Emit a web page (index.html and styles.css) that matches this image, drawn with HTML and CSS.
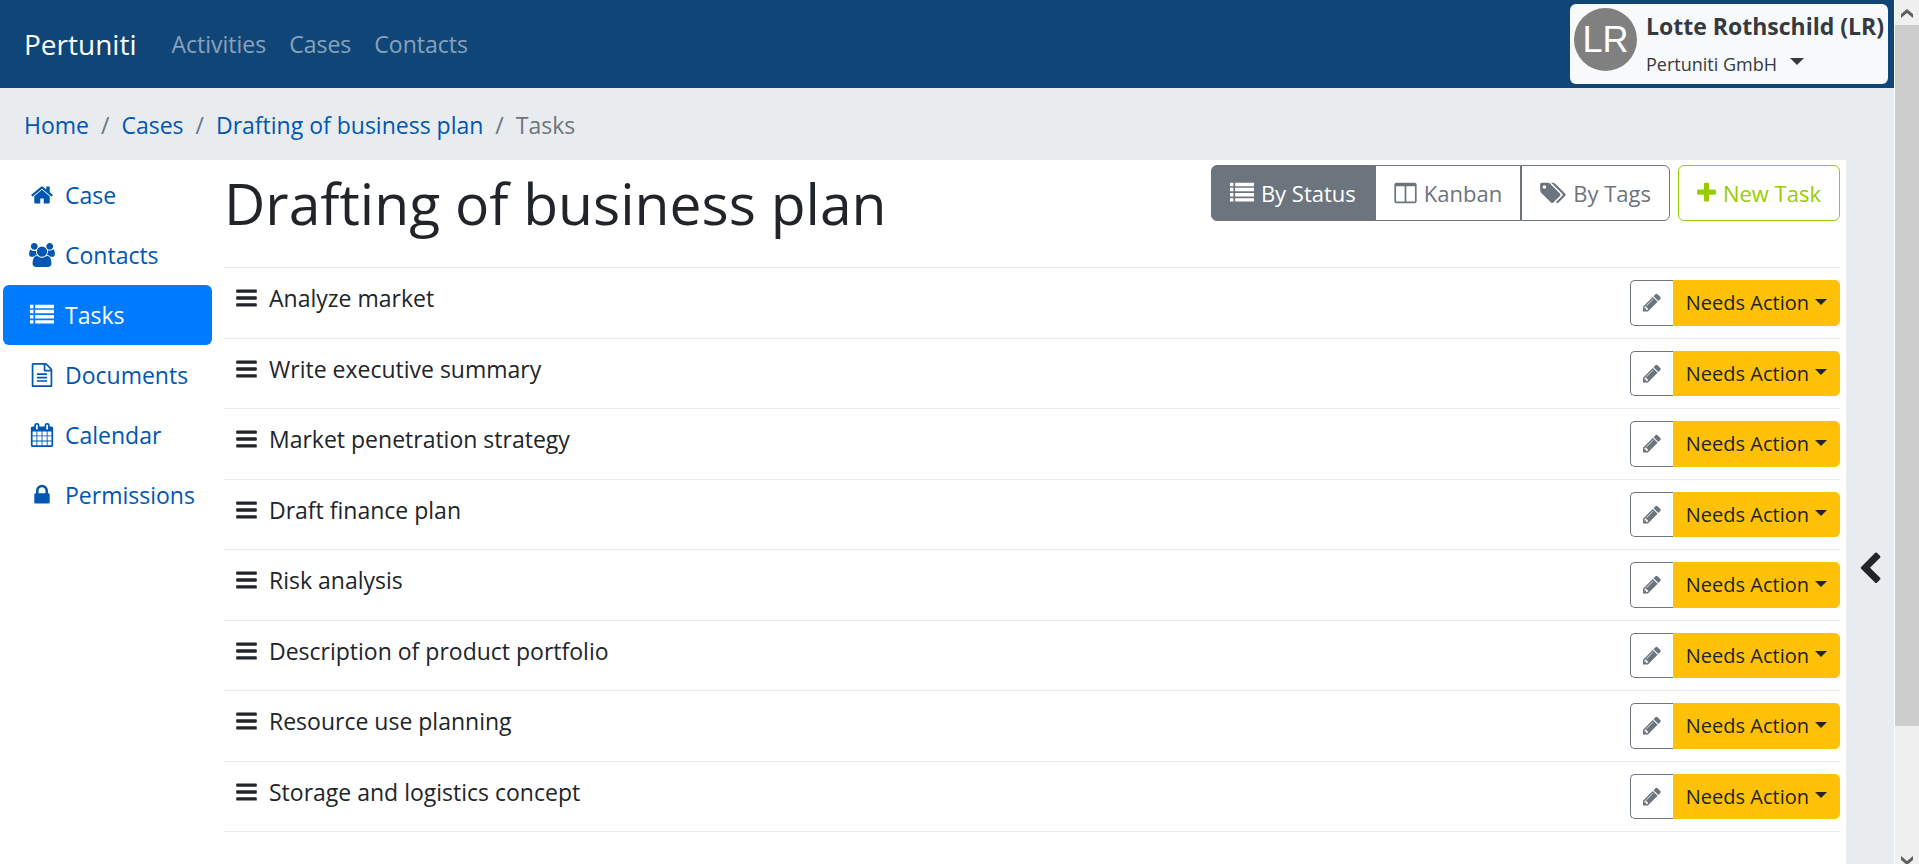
FILE: index.html
```html
<!DOCTYPE html>
<html lang="en">
<head>
    <meta charset="UTF-8">
    <meta name="viewport" content="width=device-width, initial-scale=1.0">
    <title>Drafting of business plan - Tasks</title>
    <link rel="stylesheet" href="styles.css">
</head>
<body>
    <!-- icon sprite -->
    <svg class="sprite" aria-hidden="true">
        <symbol id="home" viewBox="0 0 1792 1792"><path d="M1472 992v480q0 26-19 45t-45 19h-384v-384h-256v384h-384q-26 0-45-19t-19-45v-480q0-1 .5-3t.5-3l575-474 575 474q1 2 1 6zm223-69l-62 74q-8 9-21 11h-3q-13 0-21-7l-692-577-692 577q-12 8-24 7-13-2-21-11l-62-74q-8-10-7-23.5t11-21.5l719-599q32-26 76-26t76 26l244 204v-195q0-14 9-23t23-9h192q14 0 23 9t9 23v408l219 182q10 8 11 21.5t-7 23.5z"/></symbol>
        <symbol id="users" viewBox="0 0 1920 1792"><path d="M593 896q-162 5-265 128h-134q-82 0-138-40.5t-56-118.5q0-353 124-353 6 0 43.500 21t97.500 42.500 119 21.500q67 0 133-23-5 37-5 66 0 159 81 282zm1071 637q0 120-73 189.500t-194 69.500h-874q-121 0-194-69.500t-73-189.500q0-53 3.500-103.500t14-109 26.500-108.500 43-97.500 62-81 85.500-53.500 111.500-20q10 0 43 21.500t73 48 107 48 135 21.500 135-21.500 107-48 73-48 43-21.500q61 0 111.500 20t85.500 53.500 62 81 43 97.500 26.500 108.500 14 109 3.500 103.500zm-1024-1277q0 106-75 181t-181 75-181-75-75-181 75-181 181-75 181 75 75 181zm704 384q0 159-112.500 271.500t-271.500 112.500-271.500-112.500-112.500-271.500 112.500-271.500 271.500-112.500 271.500 112.500 112.500 271.500zm576 225q0 78-56 118.500t-138 40.500h-134q-103-123-265-128 81-123 81-282 0-29-5-66 66 23 133 23 59 0 119-21.500t97.500-42.500 43.500-21q124 0 124 353zm-128-609q0 106-75 181t-181 75-181-75-75-181 75-181 181-75 181 75 75 181z"/></symbol>
        <symbol id="list" viewBox="0 0 1792 1792"><path d="M0 128h256v256h-256zM384 128h1408v256h-1408zM0 512h256v256h-256zM384 512h1408v256h-1408zM0 896h256v256h-256zM384 896h1408v256h-1408zM0 1280h256v256h-256zM384 1280h1408v256h-1408z"/></symbol>
        <symbol id="file" viewBox="0 0 1792 1792"><path d="M1596 380q28 28 48 76t20 88v1152q0 40-28 68t-68 28h-1344q-40 0-68-28t-28-68v-1600q0-40 28-68t68-28h896q40 0 88 20t76 48zm-444-244v376h376q-10-29-22-41l-313-313q-12-12-41-22zm384 1528v-1024h-416q-40 0-68-28t-28-68v-416h-768v1536h1280zm-1024-864q0-14 9-23t23-9h704q14 0 23 9t9 23v64q0 14-9 23t-23 9h-704q-14 0-23-9t-9-23v-64zm736 224q14 0 23 9t9 23v64q0 14-9 23t-23 9h-704q-14 0-23-9t-9-23v-64q0-14 9-23t23-9h704zm0 256q14 0 23 9t9 23v64q0 14-9 23t-23 9h-704q-14 0-23-9t-9-23v-64q0-14 9-23t23-9h704z"/></symbol>
        <symbol id="calendar" viewBox="0 0 1792 1792"><path d="M192 1664h288v-288h-288v288zm352 0h320v-288h-320v288zm-352-352h288v-320h-288v320zm352 0h320v-320h-320v320zm-352-384h288v-288h-288v288zm736 736h320v-288h-320v288zm-384-736h320v-288h-320v288zm768 736h288v-288h-288v288zm-384-352h320v-320h-320v320zm-352-864v-288q0-13-9.500-22.500t-22.500-9.500h-64q-13 0-22.500 9.500t-9.500 22.500v288q0 13 9.500 22.500t22.500 9.500h64q13 0 22.500-9.500t9.500-22.500zm736 864h288v-320h-288v320zm-384-384h320v-288h-320v288zm384 0h288v-288h-288v288zm32-480v-288q0-13-9.500-22.500t-22.500-9.500h-64q-13 0-22.500 9.500t-9.500 22.500v288q0 13 9.500 22.500t22.500 9.500h64q13 0 22.500-9.500t9.500-22.500zm384-64v1280q0 52-38 90t-90 38h-1408q-52 0-90-38t-38-90v-1280q0-52 38-90t90-38h128v-96q0-66 47-113t113-47h64q66 0 113 47t47 113v96h384v-96q0-66 47-113t113-47h64q66 0 113 47t47 113v96h128q52 0 90 38t38 90z"/></symbol>
        <symbol id="lock" viewBox="0 0 1792 1792"><path d="M640 768h512v-192q0-106-75-181t-181-75-181 75-75 181v192zm832 96v576q0 40-28 68t-68 28h-960q-40 0-68-28t-28-68v-576q0-40 28-68t68-28h32v-192q0-184 132-316t316-132 316 132 132 316v192h32q40 0 68 28t28 68z"/></symbol>
        <symbol id="bars" viewBox="128 0 1536 1792"><rect x="128" y="256" width="1536" height="256" rx="64"/><rect x="128" y="768" width="1536" height="256" rx="64"/><rect x="128" y="1280" width="1536" height="256" rx="64"/></symbol>
        <symbol id="columns" viewBox="0 0 1664 1792"><path d="M160 1536h608v-1152h-640v1120q0 13 9.500 22.500t22.500 9.500zm1376-32v-1120h-640v1152h608q13 0 22.500-9.500t9.500-22.500zm128-1216v1216q0 66-47 113t-113 47h-1344q-66 0-113-47t-47-113v-1216q0-66 47-113t113-47h1344q66 0 113 47t47 113z"/></symbol>
        <symbol id="tags" viewBox="0 0 1920 1792"><path d="M448 448q0-53-37.500-90.500t-90.500-37.500-90.500 37.500-37.500 90.500 37.500 90.500 90.500 37.500 90.500-37.500 37.500-90.500zm1067 576q0 53-37 90l-491 492q-39 37-91 37-53 0-90-37l-715-716q-38-37-64.500-101t-26.500-117v-416q0-52 38-90t90-38h416q53 0 117 26.500t102 64.500l715 714q37 39 37 91zm384 0q0 53-37 90l-491 492q-39 37-91 37-36 0-59-14t-53-45l470-470q37-37 37-90 0-52-37-91l-715-714q-38-38-102-64.500t-117-26.500h224q53 0 117 26.500t102 64.500l715 714q37 39 37 91z"/></symbol>
        <symbol id="plus" viewBox="192 0 1408 1792"><path d="M1600 736v192q0 40-28 68t-68 28h-416v416q0 40-28 68t-68 28h-192q-40 0-68-28t-28-68v-416h-416q-40 0-68-28t-28-68v-192q0-40 28-68t68-28h416v-416q0-40 28-68t68-28h192q40 0 68 28t28 68v416h416q40 0 68 28t28 68z"/></symbol>
        <symbol id="pencil" viewBox="128 0 1536 1792"><path d="M491 1536l91-91-235-235-91 91v107h128v128h107zm523-928q0-22-22-22-10 0-17 7l-542 542q-7 7-7 17 0 22 22 22 10 0 17-7l542-542q7-7 7-17zm-54-192l416 416-832 832h-416v-416zm683 96q0 53-37 90l-166 166-416-416 166-165q36-38 90-38 53 0 91 38l235 234q37 39 37 91z"/></symbol>
        <symbol id="chevron" viewBox="0 0 1792 1792"><path d="M1427 301l-531 531 531 531q19 19 19 45t-19 45l-166 166q-19 19-45 19t-45-19l-742-742q-19-19-19-45t19-45l742-742q19-19 45-19t45 19l166 166q19 19 19 45t-19 45z"/></symbol>
    </svg>

    <div class="page">
        <nav class="navbar">
            <a class="brand" href="#">Pertuniti</a>
            <a class="nav-link" href="#">Activities</a>
            <a class="nav-link" href="#">Cases</a>
            <a class="nav-link" href="#">Contacts</a>
            <button class="user" type="button">
                <span class="avatar">LR</span>
                <span class="user-text">
                    <span class="user-name">Lotte Rothschild (LR)</span>
                    <span class="user-org">Pertuniti GmbH <span class="caret"></span></span>
                </span>
            </button>
        </nav>

        <ol class="breadcrumb">
            <li><a href="#">Home</a></li>
            <li><a href="#">Cases</a></li>
            <li><a href="#">Drafting of business plan</a></li>
            <li>Tasks</li>
        </ol>

        <div class="content">
            <nav class="sidebar">
                <a class="side-link" href="#"><svg class="icon"><use href="#home"/></svg>Case</a>
                <a class="side-link" href="#"><svg class="icon"><use href="#users"/></svg>Contacts</a>
                <a class="side-link active" href="#"><svg class="icon"><use href="#list"/></svg>Tasks</a>
                <a class="side-link" href="#"><svg class="icon"><use href="#file"/></svg>Documents</a>
                <a class="side-link" href="#"><svg class="icon"><use href="#calendar"/></svg>Calendar</a>
                <a class="side-link" href="#"><svg class="icon"><use href="#lock"/></svg>Permissions</a>
            </nav>

            <main class="main">
                <div class="header">
                    <h1>Drafting of business plan</h1>
                    <div class="toolbar">
                        <div class="btn-group">
                            <button class="btn active" type="button"><svg class="icon"><use href="#list"/></svg>By Status</button>
                            <button class="btn" type="button"><svg class="icon columns"><use href="#columns"/></svg>Kanban</button>
                            <button class="btn" type="button"><svg class="icon tags"><use href="#tags"/></svg>By Tags</button>
                        </div>
                        <button class="btn btn-new" type="button"><svg class="icon plus"><use href="#plus"/></svg>New Task</button>
                    </div>
                </div>

                <ul class="tasks">
                    <li class="task">
                        <svg class="icon bars"><use href="#bars"/></svg><span class="task-name">Analyze market</span>
                        <button class="edit" type="button" aria-label="Edit"><svg class="icon pencil"><use href="#pencil"/></svg></button>
                        <button class="status" type="button">Needs Action<span class="caret"></span></button>
                    </li>
                    <li class="task">
                        <svg class="icon bars"><use href="#bars"/></svg><span class="task-name">Write executive summary</span>
                        <button class="edit" type="button" aria-label="Edit"><svg class="icon pencil"><use href="#pencil"/></svg></button>
                        <button class="status" type="button">Needs Action<span class="caret"></span></button>
                    </li>
                    <li class="task">
                        <svg class="icon bars"><use href="#bars"/></svg><span class="task-name">Market penetration strategy</span>
                        <button class="edit" type="button" aria-label="Edit"><svg class="icon pencil"><use href="#pencil"/></svg></button>
                        <button class="status" type="button">Needs Action<span class="caret"></span></button>
                    </li>
                    <li class="task">
                        <svg class="icon bars"><use href="#bars"/></svg><span class="task-name">Draft finance plan</span>
                        <button class="edit" type="button" aria-label="Edit"><svg class="icon pencil"><use href="#pencil"/></svg></button>
                        <button class="status" type="button">Needs Action<span class="caret"></span></button>
                    </li>
                    <li class="task">
                        <svg class="icon bars"><use href="#bars"/></svg><span class="task-name">Risk analysis</span>
                        <button class="edit" type="button" aria-label="Edit"><svg class="icon pencil"><use href="#pencil"/></svg></button>
                        <button class="status" type="button">Needs Action<span class="caret"></span></button>
                    </li>
                    <li class="task">
                        <svg class="icon bars"><use href="#bars"/></svg><span class="task-name">Description of product portfolio</span>
                        <button class="edit" type="button" aria-label="Edit"><svg class="icon pencil"><use href="#pencil"/></svg></button>
                        <button class="status" type="button">Needs Action<span class="caret"></span></button>
                    </li>
                    <li class="task">
                        <svg class="icon bars"><use href="#bars"/></svg><span class="task-name">Resource use planning</span>
                        <button class="edit" type="button" aria-label="Edit"><svg class="icon pencil"><use href="#pencil"/></svg></button>
                        <button class="status" type="button">Needs Action<span class="caret"></span></button>
                    </li>
                    <li class="task">
                        <svg class="icon bars"><use href="#bars"/></svg><span class="task-name">Storage and logistics concept</span>
                        <button class="edit" type="button" aria-label="Edit"><svg class="icon pencil"><use href="#pencil"/></svg></button>
                        <button class="status" type="button">Needs Action<span class="caret"></span></button>
                    </li>
                </ul>
            </main>

            <button class="drawer" type="button" aria-label="Open panel"><svg class="icon chevron"><use href="#chevron"/></svg></button>
        </div>
    </div>

    <div class="scrollbar">
        <svg class="arrow" viewBox="0 0 24 25"><path d="M6 18v-4l6-5 6 5v4l-6-5z"/></svg>
        <div class="thumb"></div>
        <svg class="arrow down" viewBox="0 0 24 25"><path d="M6 18v-4l6-5 6 5v4l-6-5z"/></svg>
    </div>
</body>
</html>
```
FILE: styles.css
```css
* {
    box-sizing: border-box;
}

body {
    margin: 0;
    height: 100vh;
    display: flex;
    overflow: hidden;
    background-color: #fff;
    color: #212529;
    font-family: "Segoe UI", "Open Sans", sans-serif;
    font-size: 23px;
    line-height: 36px;
}

a {
    color: #0056b3;
    text-decoration: none;
}

button {
    font: inherit;
    cursor: pointer;
}

.sprite {
    display: none;
}

.icon {
    width: 24px;
    height: 24px;
    flex: none;
    fill: currentColor;
}

.caret {
    display: inline-block;
    border-top: 6px solid;
    border-left: 6px solid transparent;
    border-right: 6px solid transparent;
}

.page {
    flex: 1;
    min-width: 0;
    display: flex;
    flex-direction: column;
}

/* top bar */
.navbar {
    display: flex;
    align-items: center;
    gap: 23px;
    height: 88px;
    padding: 4px 6px 4px 24px;
    background-color: #104677;
}

.brand {
    margin-right: 12px;
    color: #fff;
    font-size: 28px;
}

.nav-link {
    color: rgba(255, 255, 255, 0.5);
}

.user {
    display: flex;
    gap: 9px;
    height: 80px;
    margin-left: auto;
    padding: 4px;
    border: none;
    border-radius: 6px;
    background-color: #f8f9fa;
    color: #343a40;
    text-align: left;
}

.avatar {
    width: 63px;
    height: 63px;
    border-radius: 50%;
    background-color: #808080;
    color: #fff;
    font-family: "Liberation Sans", Arial, sans-serif;
    font-size: 36px;
    line-height: 63px;
    text-align: center;
}

.user-text {
    display: flex;
    flex-direction: column;
    gap: 2px;
}

.user-name {
    font-weight: bold;
}

.user-org {
    font-size: 18px;
}

.user-org .caret {
    margin-left: 8px;
    border-width: 7px 7px 0;
    vertical-align: 6px;
}

.breadcrumb {
    display: flex;
    margin: 0;
    padding: 19px 24px 17px;
    background-color: #e9ecef;
    color: #6c757d;
    list-style: none;
}

.breadcrumb li + li::before {
    content: "/";
    padding: 0 12px;
}

/* columns below the breadcrumb */
.content {
    flex: 1;
    display: flex;
}

.sidebar {
    width: 224px;
    padding: 5px 12px 0 3px;
}

.side-link {
    display: flex;
    align-items: center;
    gap: 10px;
    padding: 12px 26px;
    border-radius: 6px;
}

.side-link .icon {
    width: 26px;
}

.side-link.active {
    background-color: #007bff;
    color: #fff;
}

.main {
    flex: 1;
    padding: 5px 6px 0 0;
}

.header {
    display: flex;
    justify-content: space-between;
    align-items: flex-start;
    height: 102px;
}

h1 {
    margin: 0;
    font-size: 57px;
    font-weight: normal;
    line-height: 76px;
}

.toolbar {
    display: flex;
    gap: 8px;
    font-size: 22px;
}

.btn-group {
    display: flex;
}

.btn {
    display: flex;
    align-items: center;
    gap: 7px;
    padding: 9px 18px;
    border: 1px solid #6c757d;
    border-radius: 6px;
    background-color: #fff;
    color: #6c757d;
}

.btn.active {
    background-color: #6c757d;
    color: #fff;
}

.btn-group .btn:not(:first-child) {
    border-top-left-radius: 0;
    border-bottom-left-radius: 0;
}

.btn-group .btn:not(:last-child) {
    border-top-right-radius: 0;
    border-bottom-right-radius: 0;
}

.btn-new {
    border-color: #99cc00;
    color: #99cc00;
}

.tasks {
    margin: 0;
    padding: 0;
    border-top: 1px solid #e9ecef;
    list-style: none;
}

.task {
    display: flex;
    align-items: flex-start;
    padding: 12px 0;
    border-bottom: 1px solid #e9ecef;
}

.task-name {
    flex: 1;
    padding-left: 12px;
}

.icon.bars {
    width: 21px;
    margin: 6px 0 0 12px;
}

.icon.columns {
    width: 23px;
}

.icon.tags {
    width: 26px;
}

.icon.plus {
    width: 19px;
}

.icon.pencil {
    width: 18px;
    height: 21px;
}

.edit,
.status {
    display: flex;
    align-items: center;
    padding: 6px 12px;
    border: 1px solid #6c757d;
    border-radius: 5px;
    font-size: 20px;
    line-height: 1.575;
}

.edit {
    align-self: stretch;
    border-right: none;
    border-radius: 5px 0 0 5px;
    background-color: #fff;
    color: #6c757d;
}

.status {
    gap: 6px;
    border-color: #ffc107;
    border-radius: 0 5px 5px 0;
    background-color: #ffc107;
    color: #212529;
}

.status .caret {
    margin-bottom: 2px;
}

.drawer {
    display: flex;
    align-items: center;
    justify-content: center;
    width: 48px;
    padding: 114px 0 0;
    border: none;
    background-color: #e9ecef;
    color: #212529;
}

.icon.chevron {
    width: 34px;
    height: 34px;
}

/* window scrollbar */
.scrollbar {
    display: flex;
    flex-direction: column;
    width: 25px;
    border-left: 1px solid #fff;
    background-color: #f0f0f0;
}

.arrow {
    height: 25px;
    flex: none;
    fill: #606060;
}

.arrow.down {
    margin-top: auto;
    margin-bottom: -10px;
    transform: rotate(180deg);
}

.thumb {
    height: 701px;
    max-height: 82%;
    background-color: #cdcdcd;
}
```
